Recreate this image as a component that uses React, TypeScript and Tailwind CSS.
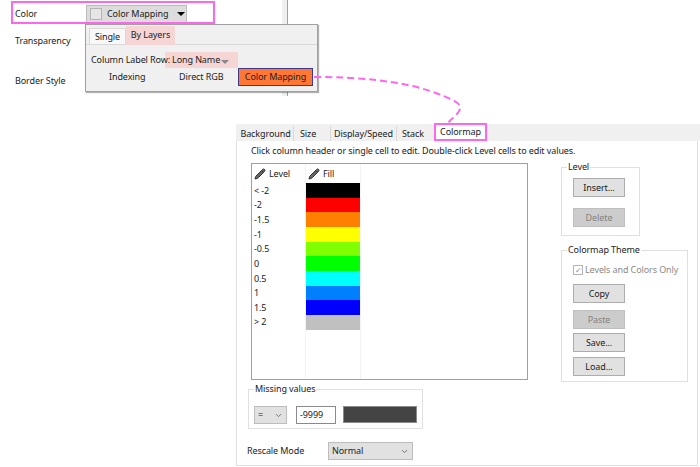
import { ChevronDown, Pencil } from 'lucide-react'
import type { ReactNode } from 'react'

const levels = [
  { label: '< -2', fill: 'bg-[#000000]' },
  { label: '-2', fill: 'bg-[#ff0000]' },
  { label: '-1.5', fill: 'bg-[#ff8000]' },
  { label: '-1', fill: 'bg-[#ffff00]' },
  { label: '-0.5', fill: 'bg-[#80ff00]' },
  { label: '0', fill: 'bg-[#00ff00]' },
  { label: '0.5', fill: 'bg-[#00ffff]' },
  { label: '1', fill: 'bg-[#0080ff]' },
  { label: '1.5', fill: 'bg-[#0000ff]' },
  { label: '> 2', fill: 'bg-[#c0c0c0]' },
]

function Btn({ label, disabled, className }: { label: string; disabled?: boolean; className?: string }) {
  return (
    <div
      className={`flex h-[19px] w-[52px] items-center justify-center border ${
        disabled ? 'border-[#bfbfbf] bg-[#cccccc] text-[#838383]' : 'border-[#adadad] bg-[#e1e1e1] text-[#222]'
      } ${className ?? ''}`}
    >
      {label}
    </div>
  )
}

function Group({ title, className, children }: { title: string; className?: string; children: ReactNode }) {
  return (
    <fieldset className={`shrink-0 border border-[#e0e0e0] ${className ?? ''}`}>
      <legend className="ml-[5px] px-[1px] leading-[10px]">{title}</legend>
      {children}
    </fieldset>
  )
}

export default function App() {
  return (
    <div className="relative h-[467px] w-[700px] overflow-hidden bg-white font-['Noto_Sans',sans-serif] text-[9px] tracking-[-0.1px] text-[#222]">
      {/* property panel behind the popup */}
      <div className="flex h-[96px] w-[288px] border-r border-[#a0a0a0]">
        <div className="flex-1 pl-[15px]">
          <div className="flex h-[24px] items-center pt-[3px]">
            <span className="w-[71px]">Color</span>
            <div className="flex h-[18px] w-[101px] items-center whitespace-nowrap border border-[#bdbdbd] bg-[#dcdcdc] pl-[3px]">
              <span className="h-[12px] w-[12px] border border-[#b5b5b5] bg-[#e6e6e6]" />
              <span className="ml-[5px]">Color Mapping</span>
              <span className="ml-[9px] h-0 w-0 border-x-[4px] border-t-[4px] border-x-transparent border-t-black" />
            </div>
          </div>
          <div className="mt-[10px] h-[12px]">Transparency</div>
          <div className="mt-[28px] h-[12px]">Border Style</div>
        </div>
        <div className="w-[5px] bg-[#f0f0f0]" />
      </div>

      {/* annotation boxes and popup */}
      <div className="absolute left-[11px] top-[1px] h-[23px] w-[204px] border-2 border-[#ff66ee]" />
      <div className="absolute left-[85px] top-[24px] h-[68px] w-[233px] border border-[#a0a0a0] bg-[#f0f0f0] shadow-[1px_1px_1px_rgba(0,0,0,0.3)]">
        <div className="flex h-[20px] items-end border-b border-[#d9d9d9] pl-[3px]">
          <div className="flex h-[16px] w-[37px] items-center justify-center border border-b-0 border-[#d9d9d9] bg-[#f8f8f8]">Single</div>
          <div className="mb-[-1px] flex h-[19px] w-[49px] items-center justify-center bg-[#f6d5d5] pb-[2px]">By Layers</div>
        </div>
        <div className="mt-[7px] flex h-[16px] items-center pl-[5px]">
          <span className="relative z-10 whitespace-nowrap">Column Label Row:</span>
          <div className="ml-[-5px] flex h-[16px] w-[73px] items-center bg-[#f6d5d5] pl-[7px]">
            <span>Long Name</span>
            <span className="ml-[1px] mt-[3px] h-0 w-0 border-x-[4px] border-t-[4px] border-x-transparent border-t-[#888]" />
          </div>
        </div>
        <div className="flex h-[18px] items-center">
          <span className="w-[84px] pl-[23px]">Indexing</span>
          <span className="w-[68px] pl-[9px]">Direct RGB</span>
          <div className="flex h-[18px] w-[75px] items-center justify-center border border-[#3a3a90] bg-[#ff7733]">Color Mapping</div>
        </div>
      </div>

      {/* dashed link from the popup to the Colormap tab */}
      <svg className="absolute left-0 top-0" width="700" height="467" fill="none">
        <path
          d="M314 77 C360 77 400 81 430 91 C450 98 462 103 460 109 C458 116 450 118 447 125"
          stroke="#ff66ee"
          strokeWidth="2"
          strokeDasharray="7 4"
        />
      </svg>

      {/* plot details dialog */}
      <div className="ml-[236px] mt-[28px] h-[342px] w-[464px]">
        <div className="flex h-[17px] items-end bg-[#f0f0f0] pl-[2px]">
          <span className="flex h-[15px] w-[56px] items-center justify-center border-r border-[#d9d9d9]">Background</span>
          <span className="flex h-[15px] w-[37px] items-center border-r border-[#d9d9d9] pl-[6px]">Size</span>
          <span className="flex h-[15px] w-[66px] items-center justify-center border-r border-[#d9d9d9]">Display/Speed</span>
          <span className="flex h-[15px] w-[35px] items-center pl-[5px]">Stack</span>
          <span className="relative z-10 ml-[2px] flex h-[18px] w-[53px] items-center justify-center border-2 border-[#ff66ee] bg-white">Colormap</span>
        </div>
        <div className="h-[325px] w-[462px] border-x border-b border-[#e0e0e0] pl-[14px]">
          <div className="h-[22px] pt-[3px]">
            Click column header or single cell to edit. Double-click Level cells to edit values.
          </div>
          <div className="flex h-[217px] gap-[33px]">
            <div className="h-[217px] w-[277px] border border-[#a0a0a0]">
              <div className="flex h-full">
                <div className="w-[54px] border-r border-[#eef3fa]">
                  <div className="flex h-[19px] items-center gap-[3px] pl-[2px]">
                    <Pencil size={12} fill="#666" color="#333" />
                    Level
                  </div>
                  {levels.map((l) => (
                    <div key={l.label} className="flex h-[14.67px] items-center pl-[2px]">{l.label}</div>
                  ))}
                </div>
                <div className="w-[55px] border-r border-[#eef3fa]">
                  <div className="flex h-[19px] items-center gap-[3px] pl-[2px]">
                    <Pencil size={12} fill="#666" color="#333" />
                    Fill
                  </div>
                  {levels.map((l) => (
                    <div key={l.label} className={`h-[14.67px] ${l.fill}`} />
                  ))}
                </div>
              </div>
            </div>
            <div className="mt-[-1px] flex h-[218px] w-[128px] flex-col gap-[9px]">
              <Group title="Level" className="h-[74px] w-[79px]">
                <div className="pl-[11px] pt-[6px]">
                  <Btn label="Insert..." />
                  <Btn label="Delete" disabled className="mt-[11px] w-[51px]" />
                </div>
              </Group>
              <Group title="Colormap Theme" className="h-[137px] w-[127px]">
                <div className="pl-[11px] pt-[8px]">
                  <div className="flex h-[14px] items-center text-[#8a8a8a]">
                    <span className="mr-[2px] flex h-[10px] w-[10px] items-center justify-center border border-[#b5b5b5] text-[8px] leading-none">✓</span>
                    Levels and Colors Only
                  </div>
                  <Btn label="Copy" className="mt-[7px]" />
                  <Btn label="Paste" disabled className="mt-[7px]" />
                  <Btn label="Save..." className="mt-[4px]" />
                  <Btn label="Load..." className="mt-[5px]" />
                </div>
              </Group>
            </div>
          </div>
          <Group title="Missing values" className="ml-[-3px] mt-[4px] h-[45px] w-[175px]">
            <div className="flex items-start gap-[9px] pl-[5px] pt-[12px]">
              <div className="flex h-[18px] w-[33px] items-center justify-between border border-[#bdbdbd] bg-[#e1e1e1] px-[3px]">
                =
                <ChevronDown size={9} color="#555" />
              </div>
              <div className="flex h-[18px] w-[40px] items-center border border-[#8a8a8a] bg-white pl-[3px]">-9999</div>
              <div className="ml-[-2px] h-[17px] w-[74px] border border-[#8a8a8a] bg-[#444444]" />
            </div>
          </Group>
          <div className="ml-[-4px] mt-[13px] flex h-[18px] items-center">
            <span className="w-[81px]">Rescale Mode</span>
            <div className="flex h-[18px] w-[85px] items-center justify-between border border-[#bdbdbd] bg-[#e1e1e1] px-[3px]">
              Normal
              <ChevronDown size={9} color="#555" />
            </div>
          </div>
        </div>
      </div>
    </div>
  )
}
